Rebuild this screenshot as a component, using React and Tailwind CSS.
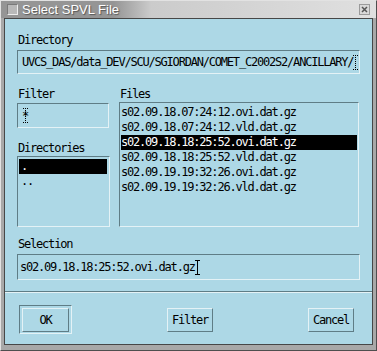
import React from "react";

const mono = "font-['DejaVu_Sans_Mono',monospace] text-[12px] tracking-[-1.2px] text-black";
const sunken =
  "border border-t-[#5f7d86] border-l-[#5f7d86] border-b-[#e4f2f6] border-r-[#e4f2f6]";
const raised =
  "border border-t-[#e4f2f6] border-l-[#e4f2f6] border-b-[#5f7d86] border-r-[#5f7d86]";

const files = [
  "s02.09.18.07:24:12.ovi.dat.gz",
  "s02.09.18.07:24:12.vld.dat.gz",
  "s02.09.18.18:25:52.ovi.dat.gz",
  "s02.09.18.18:25:52.vld.dat.gz",
  "s02.09.19.19:32:26.ovi.dat.gz",
  "s02.09.19.19:32:26.vld.dat.gz",
];

const IBeam = ({ dotted }) => (
  <svg width="5" height="15" viewBox="0 0 5 15" className="shrink-0">
    <path
      d="M0 0.5h5M2.5 0v15M0 14.5h5"
      stroke="#000"
      strokeWidth="1"
      strokeDasharray={dotted ? "1 1" : undefined}
      fill="none"
    />
  </svg>
);

const Label = ({ children, className = "" }) => (
  <div className={`h-[13px] leading-[13px] ${className}`}>{children}</div>
);

const Button = ({ children }) => (
  <div
    className={`${raised} w-[46px] h-[24px] mt-[3px] flex items-center justify-center bg-[#add8e6]`}
  >
    {children}
  </div>
);

export default function App() {
  return (
    <div className="w-[377px] h-[351px] bg-[#a8a8a8] border border-t-[#e2e2e2] border-l-[#e2e2e2] border-b-[#4e4e4e] border-r-[#4e4e4e] flex flex-col overflow-hidden">
      {/* title bar */}
      <div className="h-[17px] shrink-0 flex items-center bg-linear-to-r from-[#959595] from-30% via-[#cbcbcb] via-40% to-[#e0e0e0]">
        <div className="ml-[6px] w-[11px] h-[11px] bg-[#b9b9b9] border border-t-[#7a7a7a] border-l-[#7a7a7a] border-b-[#ececec] border-r-[#ececec]" />
        <span className="ml-[4px] font-['Liberation_Sans',sans-serif] text-[13px] leading-[17px] text-white [text-shadow:1px_1px_1px_#555]">
          Select SPVL File
        </span>
        <div className="ml-auto mr-[6px] w-[11px] h-[11px] bg-[#d8d8d8] border border-[#9a9a9a] flex items-center justify-center">
          <svg width="7" height="7" viewBox="0 0 7 7">
            <path d="M1 1L6 6M6 1L1 6" stroke="#555" strokeWidth="1.5" />
          </svg>
        </div>
      </div>

      {/* dialog body */}
      <div className="mx-[3px] mb-[5px] flex-1 border border-[#474747] bg-[#add8e6] flex flex-col">
        <div className={`${mono} flex flex-col`}>
          <Label className="ml-[13px] mt-[15px]">Directory</Label>
          <div
            className={`${sunken} ml-[12px] mt-[3px] w-[343px] h-[24px] pl-[4px] flex items-center overflow-hidden whitespace-nowrap`}
          >
            <span>UVCS_DAS/data_DEV/SCU/SGIORDAN/COMET_C2002S2/ANCILLARY/</span>
            <IBeam dotted />
          </div>

          <div className="flex mt-[14px] ml-[12px]">
            <div className="w-[93px] flex flex-col">
              <Label className="ml-[1px]">Filter</Label>
              <div
                className={`${sunken} relative mt-[2px] w-[92px] h-[25px] pl-[4px] flex items-center`}
              >
                <span>*</span>
                <div className="absolute left-[5px] top-[4px]">
                  <IBeam dotted />
                </div>
              </div>
              <Label className="ml-[1px] mt-[14px]">Directories</Label>
              <div className={`${sunken} mt-[1px] w-[93px] h-[71px] pt-[2px] px-[1px]`}>
                {[".", ".."].map((d, i) => (
                  <div
                    key={d}
                    className={`h-[15px] leading-[15px] pl-[2px] mr-[1px] ${
                      i === 0 ? "bg-black text-white" : ""
                    }`}
                  >
                    {d}
                  </div>
                ))}
              </div>
            </div>

            <div className="ml-[9px] flex flex-col">
              <Label className="ml-[1px]">Files</Label>
              <div className={`${sunken} mt-[1px] w-[240px] h-[125px] pt-[2px] px-[1px]`}>
                {files.map((f, i) => (
                  <div
                    key={f}
                    className={`h-[15px] leading-[15px] ${
                      i === 2 ? "bg-black text-white" : ""
                    }`}
                  >
                    {f}
                  </div>
                ))}
              </div>
            </div>
          </div>

          <Label className="ml-[13px] mt-[11px]">Selection</Label>
          <div
            className={`${sunken} ml-[12px] mt-[3px] w-[343px] h-[26px] pl-[2px] flex items-center whitespace-nowrap`}
          >
            <span>s02.09.18.18:25:52.ovi.dat.gz</span>
            <IBeam />
          </div>

          <div className="mt-[11px] border-t border-t-[#5f7d86] border-b border-b-[#e4f2f6]" />

          <div className="mt-[12px] pl-[14px] pr-[18px] flex justify-between items-start">
            <div className={`${sunken} w-[53px] h-[29px] flex items-center justify-center`}>
              <div
                className={`${raised} w-[47px] h-[24px] flex items-center justify-center`}
              >
                OK
              </div>
            </div>
            <Button>Filter</Button>
            <Button>Cancel</Button>
          </div>
        </div>
      </div>
    </div>
  );
}
